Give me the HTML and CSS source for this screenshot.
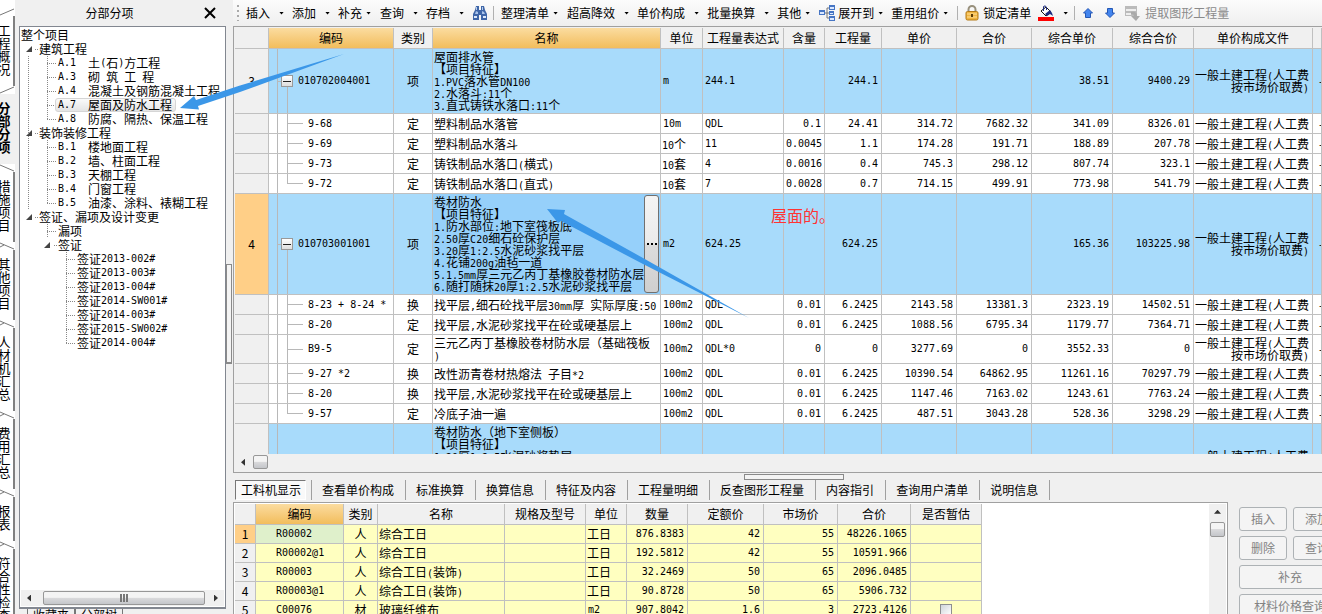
FILE: index.html
```html
<!DOCTYPE html>
<html lang="zh-CN">
<head>
<meta charset="utf-8">
<title>分部分项</title>
<link rel="stylesheet" href="styles.css">
</head>
<body>
<div class="app">
  <nav class="side">
    <svg class="sep" viewBox="0 0 15 8"><path d="M0 7L14 1"/></svg><button class="vtab">工程概况</button>
    <svg class="sep" viewBox="0 0 15 8"><path d="M0 7L14 1"/></svg><button class="vtab on">分部分项</button>
    <svg class="sep" viewBox="0 0 15 8"><path d="M0 1L14 7"/></svg><button class="vtab">措施项目</button>
    <svg class="sep" viewBox="0 0 15 8"><path d="M0 1L14 7M0 5L4 3"/></svg><button class="vtab">其他项目</button>
    <svg class="sep" viewBox="0 0 15 8"><path d="M0 1L14 7M0 5L4 3"/></svg><button class="vtab">人材机汇总</button>
    <svg class="sep" viewBox="0 0 15 8"><path d="M0 1L14 7M0 5L4 3"/></svg><button class="vtab">费用汇总</button>
    <svg class="sep" viewBox="0 0 15 8"><path d="M0 1L14 7M0 5L4 3"/></svg><button class="vtab">报表</button>
    <svg class="sep" viewBox="0 0 15 8"><path d="M0 1L14 7M0 5L4 3"/></svg><button class="vtab">符合性检查</button>
  </nav>

  <aside class="panel">
    <header class="panel-head"><h1>分部分项</h1><button class="close" aria-label="关闭"><svg width="12" height="12" viewBox="0 0 12 12"><path d="M1 1L11 11M11 1L1 11" stroke="#000" stroke-width="2"/></svg></button></header>
    <div class="tree">
      <ul>
        <li>整个项目</li>
        <li><i class="g open"></i>建筑工程</li>
        <li><i class="g v"></i><i class="g t"></i><span class="n">A.1  </span>土<span class="n">(</span>石<span class="n">)</span>方工程</li>
        <li><i class="g v"></i><i class="g t"></i><span class="n">A.3  </span>砌<span class="n"> </span>筑<span class="n"> </span>工<span class="n"> </span>程</li>
        <li><i class="g v"></i><i class="g t"></i><span class="n">A.4  </span>混凝土及钢筋混凝土工程</li>
        <li><i class="g v"></i><i class="g t"></i><b class="sel"><span class="n">A.7  </span>屋面及防水工程</b></li>
        <li><i class="g v"></i><i class="g e"></i><span class="n">A.8  </span>防腐、隔热、保温工程</li>
        <li><i class="g open v"></i>装饰装修工程</li>
        <li><i class="g v"></i><i class="g t"></i><span class="n">B.1  </span>楼地面工程</li>
        <li><i class="g v"></i><i class="g t"></i><span class="n">B.2  </span>墙、柱面工程</li>
        <li><i class="g v"></i><i class="g t"></i><span class="n">B.3  </span>天棚工程</li>
        <li><i class="g v"></i><i class="g t"></i><span class="n">B.4  </span>门窗工程</li>
        <li><i class="g v"></i><i class="g e"></i><span class="n">B.5  </span>油漆、涂料、裱糊工程</li>
        <li><i class="g open"></i>签证、漏项及设计变更</li>
        <li><i class="g"></i><i class="g t"></i>漏项</li>
        <li><i class="g"></i><i class="g open"></i>签证</li>
        <li><i class="g"></i><i class="g"></i><i class="g t"></i>签证<span class="n">2013-002#</span></li>
        <li><i class="g"></i><i class="g"></i><i class="g t"></i>签证<span class="n">2013-003#</span></li>
        <li><i class="g"></i><i class="g"></i><i class="g t"></i>签证<span class="n">2013-004#</span></li>
        <li><i class="g"></i><i class="g"></i><i class="g t"></i>签证<span class="n">2014-SW001#</span></li>
        <li><i class="g"></i><i class="g"></i><i class="g t"></i>签证<span class="n">2014-003#</span></li>
        <li><i class="g"></i><i class="g"></i><i class="g t"></i>签证<span class="n">2015-SW002#</span></li>
        <li><i class="g"></i><i class="g"></i><i class="g e"></i>签证<span class="n">2014-004#</span></li>
      </ul>
      <div class="hbar"><i class="arr left"></i><div class="thumb"><i></i><i></i><i></i></div><i class="arr right"></i></div>
    </div>
    <footer class="panel-tabs"><a href="#fav">收藏夹</a><a href="#tree">分部树</a></footer>
  </aside>

  <div class="vsplit"><i></i></div>

  <main class="main">
    <div class="toolbar">
      <i class="grip"></i>
      <button class="tb wide">插入</button><button class="tb wide">添加</button><button class="tb">补充</button><button class="tb wide">查询</button><button class="tb wide">存档</button>
      <button class="ic" aria-label="查找"><svg width="16" height="16" viewBox="0 0 16 16"><path d="M4 1h3v4h2V1h3l1 4 2 4v6H9v-5H7v5H1V9l2-4z" fill="#3f66a8"/><path d="M3 9l1-3 2 1v2zM10 9V6l2 1 1 2z" fill="#a9c3ea"/><path d="M2 11h3v2H2zM11 11h3v2h-3z" fill="#dce8fa"/><path d="M4.500 2v3M10.500 2v3" stroke="#b9cdec"/></svg></button>
      <i class="bar"></i>
      <button class="tb">整理清单</button><button class="tb wide">超高降效</button><button class="tb wide">单价构成</button><button class="tb wide">批量换算</button><button class="tb">其他</button>
      <button class="tb pic"><svg width="16" height="16" viewBox="0 0 16 16"><path d="M5 8h3M8 3v10M8 3h3M8 13h3M8 8h3" stroke="#777" fill="none"/><path d="M0 5h6v5H0zM10 0h6v5h-6zM10 6h5v4h-5zM10 11h6v5h-6z" fill="#4776c4"/><path d="M1 7h4v2H1zM11 2h4v2h-4zM11 8h3v1h-3zM11 13h4v2h-4z" fill="#dbe8ff"/></svg>展开到</button><button class="tb">重用组价</button>
      <i class="bar"></i>
      <button class="lock"><svg width="14" height="16" viewBox="0 0 14 16"><path d="M3.500 7V4.500a3.500 3.500 0 0 1 7 0V7" fill="none" stroke="#98907c" stroke-width="2"/><rect x="1" y="6.500" width="12" height="8.500" rx="1.500" fill="#f0b542" stroke="#b37a18"/><path d="M2 9h10M2 12h10" stroke="#ffe09a"/><path d="M7 9v3" stroke="#5c3d08" stroke-width="2"/></svg>锁定清单</button>
      <button class="tb paint" aria-label="填充颜色"><svg width="16" height="16" viewBox="0 0 16 16"><path d="M3 6l5-4 5 5-5 4z" fill="#fff" stroke="#111"/><path d="M5.500 6V1.500Q7 0 8.500 2v3" stroke="#1c2c80" fill="none"/><path d="M7 9l5-4 2 3 1 3-3-2-3 2z" fill="#1c2c80"/><path d="M0 12h16v4H0z" fill="#f00"/></svg></button>
      <i class="bar"></i>
      <button class="ic up" aria-label="上移"><svg width="10" height="10" viewBox="0 0 10 10"><path d="M5 .5L9.500 5H7.500V9.500H2.500V5H.5z" fill="#4385ee" stroke="#2457b5"/></svg></button>
      <button class="ic down" aria-label="下移"><svg width="10" height="10" viewBox="0 0 10 10"><path d="M5 9.500L.5 5h2V.5h5V5h2z" fill="#4385ee" stroke="#2457b5"/></svg></button>
      <button class="extract" disabled><svg width="16" height="16" viewBox="0 0 16 16"><path d="M0 1h12v10H0z" fill="#bbb"/><path d="M1 4h10v2H1zM1 8h5v2H1z" fill="#eee"/><path d="M6 7q6-1 6 4h3l-4 5-5-5h3q0-2-3-2z" fill="#aaa"/></svg>提取图形工程量</button>
    </div>

    <section class="upper">
      <div class="clip">
      <table class="grid">
        <colgroup><col class="w34"><col class="w125"><col class="w39"><col class="w228"><col class="w42"><col class="w81"><col class="w41"><col class="w57"><col class="w75"><col class="w75"><col class="w81"><col class="w81"><col class="w119"><col></colgroup>
        <thead><tr><th></th><th class="hot">编码</th><th>类别</th><th class="hot">名称</th><th>单位</th><th>工程量表达式</th><th>含量</th><th>工程量</th><th>单价</th><th>合价</th><th>综合单价</th><th>综合合价</th><th>单价构成文件</th><th></th></tr></thead>
        <tbody>
        <tr class="blue"><th>3</th><td class="code parent"><button class="fold" aria-label="折叠"></button>010702004001</td><td class="c">项</td><td>屋面排水管<br>【项目特征】<br><span class="n">1.PVC</span>落水管<span class="n">DN100</span><br><span class="n">2.</span>水落斗<span class="n">:11</span>个<br><span class="n">3.</span>直式铸铁水落口<span class="n">:11</span>个</td><td class="m">m</td><td class="m">244.1</td><td></td><td class="m r">244.1</td><td></td><td></td><td class="m r">38.51</td><td class="m r">9400.29</td><td class="f">一般土建工程<span class="n">(</span>人工费<br>按市场价取费<span class="n">)</span></td><td class="d">-</td></tr>
        <tr><th></th><td class="code">9-68</td><td class="c">定</td><td>塑料制品水落管</td><td class="m">10m</td><td class="m">QDL</td><td class="m r">0.1</td><td class="m r">24.41</td><td class="m r">314.72</td><td class="m r">7682.32</td><td class="m r">341.09</td><td class="m r">8326.01</td><td class="f">一般土建工程<span class="n">(</span>人工费</td><td class="d">-</td></tr>
        <tr><th></th><td class="code">9-69</td><td class="c">定</td><td>塑料制品水落斗</td><td><span class="n">10</span>个</td><td class="m">11</td><td class="m r">0.0045</td><td class="m r">1.1</td><td class="m r">174.28</td><td class="m r">191.71</td><td class="m r">188.89</td><td class="m r">207.78</td><td class="f">一般土建工程<span class="n">(</span>人工费</td><td class="d">-</td></tr>
        <tr><th></th><td class="code">9-73</td><td class="c">定</td><td>铸铁制品水落口<span class="n">(</span>横式<span class="n">)</span></td><td><span class="n">10</span>套</td><td class="m">4</td><td class="m r">0.0016</td><td class="m r">0.4</td><td class="m r">745.3</td><td class="m r">298.12</td><td class="m r">807.74</td><td class="m r">323.1</td><td class="f">一般土建工程<span class="n">(</span>人工费</td><td class="d">-</td></tr>
        <tr><th></th><td class="code last">9-72</td><td class="c">定</td><td>铸铁制品水落口<span class="n">(</span>直式<span class="n">)</span></td><td><span class="n">10</span>套</td><td class="m">7</td><td class="m r">0.0028</td><td class="m r">0.7</td><td class="m r">714.15</td><td class="m r">499.91</td><td class="m r">773.98</td><td class="m r">541.79</td><td class="f">一般土建工程<span class="n">(</span>人工费</td><td class="d">-</td></tr>
        <tr class="blue"><th class="cur">4</th><td class="code parent"><button class="fold" aria-label="折叠"></button>010703001001</td><td class="c">项</td><td class="active">卷材防水<br>【项目特征】<br><span class="n">1.</span>防水部位<span class="n">:</span>地下室筏板底<br><span class="n">2.50</span>厚<span class="n">C20</span>细石砼保护层<br><span class="n">3.20</span>厚<span class="n">1:2.5</span>水泥砂浆找平层<br><span class="n">4.</span>花铺<span class="n">200g</span>油毡一道<br><span class="n">5.1.5mm</span>厚三元乙丙丁基橡胶卷材防水层<br><span class="n">6.</span>随打随抹<span class="n">20</span>厚<span class="n">1:2.5</span>水泥砂浆找平层<button class="more" aria-label="更多"><i></i><i></i><i></i></button></td><td class="m">m2</td><td class="m">624.25</td><td></td><td class="m r">624.25</td><td></td><td></td><td class="m r">165.36</td><td class="m r">103225.98</td><td class="f">一般土建工程<span class="n">(</span>人工费<br>按市场价取费<span class="n">)</span></td><td class="d">-</td></tr>
        <tr><th></th><td class="code">8-23 + 8-24 *</td><td class="c">换</td><td>找平层<span class="n">,</span>细石砼找平层<span class="n">30mm</span>厚<span class="n"> </span>实际厚度<span class="n">:50</span></td><td class="m">100m2</td><td class="m">QDL</td><td class="m r">0.01</td><td class="m r">6.2425</td><td class="m r">2143.58</td><td class="m r">13381.3</td><td class="m r">2323.19</td><td class="m r">14502.51</td><td class="f">一般土建工程<span class="n">(</span>人工费</td><td class="d">-</td></tr>
        <tr><th></th><td class="code">8-20</td><td class="c">定</td><td>找平层<span class="n">,</span>水泥砂浆找平在砼或硬基层上</td><td class="m">100m2</td><td class="m">QDL</td><td class="m r">0.01</td><td class="m r">6.2425</td><td class="m r">1088.56</td><td class="m r">6795.34</td><td class="m r">1179.77</td><td class="m r">7364.71</td><td class="f">一般土建工程<span class="n">(</span>人工费</td><td class="d">-</td></tr>
        <tr><th></th><td class="code">B9-5</td><td class="c">定</td><td>三元乙丙丁基橡胶卷材防水层（基础筏板<br><span class="n">)</span></td><td class="m">100m2</td><td class="m">QDL*0</td><td class="m r">0</td><td class="m r">0</td><td class="m r">3277.69</td><td class="m r">0</td><td class="m r">3552.33</td><td class="m r">0</td><td class="f">一般土建工程<span class="n">(</span>人工费<br>按市场价取费<span class="n">)</span></td><td class="d">-</td></tr>
        <tr><th></th><td class="code">9-27 *2</td><td class="c">换</td><td>改性沥青卷材热熔法<span class="n"> </span>子目<span class="n">*2</span></td><td class="m">100m2</td><td class="m">QDL</td><td class="m r">0.01</td><td class="m r">6.2425</td><td class="m r">10390.54</td><td class="m r">64862.95</td><td class="m r">11261.16</td><td class="m r">70297.79</td><td class="f">一般土建工程<span class="n">(</span>人工费</td><td class="d">-</td></tr>
        <tr><th></th><td class="code">8-20</td><td class="c">换</td><td>找平层<span class="n">,</span>水泥砂浆找平在砼或硬基层上</td><td class="m">100m2</td><td class="m">QDL</td><td class="m r">0.01</td><td class="m r">6.2425</td><td class="m r">1147.46</td><td class="m r">7163.02</td><td class="m r">1243.61</td><td class="m r">7763.24</td><td class="f">一般土建工程<span class="n">(</span>人工费</td><td class="d">-</td></tr>
        <tr><th></th><td class="code last">9-57</td><td class="c">定</td><td>冷底子油一遍</td><td class="m">100m2</td><td class="m">QDL</td><td class="m r">0.01</td><td class="m r">6.2425</td><td class="m r">487.51</td><td class="m r">3043.28</td><td class="m r">528.36</td><td class="m r">3298.29</td><td class="f">一般土建工程<span class="n">(</span>人工费</td><td class="d">-</td></tr>
        <tr class="blue tall"><th></th><td class="code parent"></td><td></td><td class="top">卷材防水（地下室侧板）<br>【项目特征】<br><span class="n">1.20</span>厚<span class="n">1:2.5</span>水泥砂浆垫层</td><td></td><td></td><td></td><td></td><td></td><td></td><td></td><td></td><td class="f">一般土建工程<span class="n">(</span>人工费<br>按市场价取费<span class="n">)</span></td><td></td></tr>
        </tbody>
      </table>
      </div>
      <div class="hbar plain"><i class="arr left"></i><div class="thumb"></div></div>
    </section>

    <div class="hsplit"><i></i></div>
    <nav class="tabs"><button class="on">工料机显示</button><button>查看单价构成</button><button>标准换算</button><button>换算信息</button><button>特征及内容</button><button>工程量明细</button><button>反查图形工程量</button><button>内容指引</button><button>查询用户清单</button><button>说明信息</button></nav>

    <section class="lower">
      <div class="detail">
        <div class="clip">
        <table class="grid yellow">
          <colgroup><col class="w21"><col class="w88"><col class="w34"><col class="w127"><col class="w81"><col class="w41"><col class="w61"><col class="w76"><col class="w74"><col class="w73"><col class="w71"></colgroup>
          <thead><tr><th></th><th class="hot">编码</th><th>类别</th><th>名称</th><th>规格及型号</th><th>单位</th><th>数量</th><th>定额价</th><th>市场价</th><th>合价</th><th>是否暂估</th></tr></thead>
          <tbody>
          <tr><th class="cur">1</th><td class="id focus">R00002</td><td class="c">人</td><td>综合工日</td><td></td><td>工日</td><td class="m r">876.8383</td><td class="m r">42</td><td class="m r">55</td><td class="m r">48226.1065</td><td></td></tr>
          <tr><th>2</th><td class="id">R00002@1</td><td class="c">人</td><td>综合工日</td><td></td><td>工日</td><td class="m r">192.5812</td><td class="m r">42</td><td class="m r">55</td><td class="m r">10591.966</td><td></td></tr>
          <tr><th>3</th><td class="id">R00003</td><td class="c">人</td><td>综合工日<span class="n">(</span>装饰<span class="n">)</span></td><td></td><td>工日</td><td class="m r">32.2469</td><td class="m r">50</td><td class="m r">65</td><td class="m r">2096.0485</td><td></td></tr>
          <tr><th>4</th><td class="id">R00003@1</td><td class="c">人</td><td>综合工日<span class="n">(</span>装饰<span class="n">)</span></td><td></td><td>工日</td><td class="m r">90.8728</td><td class="m r">50</td><td class="m r">65</td><td class="m r">5906.732</td><td></td></tr>
          <tr><th>5</th><td class="id">C00076</td><td class="c">材</td><td>玻璃纤维布</td><td></td><td class="m">m2</td><td class="m r">907.8042</td><td class="m r">1.6</td><td class="m r">3</td><td class="m r">2723.4126</td><td class="c"><input type="checkbox" aria-label="是否暂估"></td></tr>
          </tbody>
        </table>
        </div>
        <div class="vbar"><i class="arr top"></i><div class="thumb"></div></div>
      </div>
      <div class="actions">
        <button disabled>插入</button><button disabled>添加</button>
        <button disabled>删除</button><button disabled>查询</button>
        <button disabled class="full">补充</button>
        <button disabled class="full">材料价格查询</button>
      </div>
    </section>
  </main>

  <svg class="notes" viewBox="0 0 1322 614" width="1322" height="614">
    <path d="M180 108L194 96L196 100L240 85.500L344 54L240 92L198 106L199 109.500Z"/>
    <path d="M547 209L565 210L564 214L643 258L749 318L643 264L561 221L558 223Z"/>
  </svg>
  <p class="remark">屋面的。</p>
</div>
</body>
</html>
```
FILE: styles.css
```css
* { box-sizing: border-box; }
body {
  margin: 0;
  background: #f0f0f0;
  color: #000;
  font: 12px/12px "Noto Sans CJK SC", "Noto Sans", sans-serif;
}
button {
  margin: 0;
  padding: 0;
  border: 0;
  background: none;
  color: inherit;
  font: inherit;
  white-space: nowrap;
}
ul, p, h1 { margin: 0; padding: 0; }
.n, .m, .code, .id { font-family: "DejaVu Sans Mono", monospace; font-size: 10px; }
.n { line-height: 0; white-space: pre; }

.app {
  position: relative;
  display: grid;
  grid-template-columns: 15px 211px 7px minmax(0, 1fr);
  grid-template-rows: 100vh;
  overflow: hidden;
}

/* vertical page tabs */
.side {
  display: flex;
  flex-direction: column;
  padding-top: 8px;
  overflow: hidden;
  background: #fff;
}
.sep { flex: none; width: 15px; height: 8px; }
.sep path { stroke: #777; fill: none; }
.vtab {
  flex: none;
  width: 15px;
  padding: 8px 5px 10px 0;
  border-right: 2px solid #808080;
  background: #fff;
  font-size: 13px;
  line-height: 13px;
  writing-mode: vertical-rl;
  display: flex;
  align-items: center;
}
.vtab.on { border-color: #f0f0f0; background: #f0f0f0; font-weight: bold; }

/* section tree */
.panel { display: flex; flex-direction: column; min-width: 0; padding-left: 4px; }
.panel-head { display: flex; align-items: center; height: 26px; padding-right: 10px; }
.panel-head h1 { flex: 1; padding-right: 4px; font-size: 12px; font-weight: normal; text-align: center; }
.close { display: flex; }
.tree {
  flex: 1;
  display: flex;
  flex-direction: column;
  min-height: 0;
  padding: 1px;
  border: 1px solid #828790;
  border-bottom-width: 2px;
  background: #fff;
  overflow: hidden;
}
.tree ul { flex: 1; list-style: none; min-height: 0; }
.tree li { display: flex; align-items: center; height: 14px; line-height: 14px; white-space: nowrap; }
.tree .n { line-height: 14px; }
.g { flex: none; width: 18px; height: 14px; background-repeat: no-repeat; }
.g + .g { width: 19px; }
.v { background-image: repeating-linear-gradient(#888 0 1px, transparent 1px 2px); background-size: 1px 14px; background-position: 7px 0; }
.t, .e { background-image: repeating-linear-gradient(#888 0 1px, transparent 1px 2px), repeating-linear-gradient(90deg, #888 0 1px, transparent 1px 2px); background-size: 1px 14px, 9px 1px; background-position: 8px 0, 8px 7px; }
.e { background-size: 1px 8px, 9px 1px; }
.open { display: flex; align-items: center; justify-content: space-between; padding: 0 1px 0 5px; }
.open::before { content: ""; width: 6px; height: 6px; background: #444; clip-path: polygon(100% 0, 100% 100%, 0 100%); }
.open::after { content: ""; width: 3px; height: 1px; background: repeating-linear-gradient(90deg, #888 0 1px, transparent 1px 2px); }
.sel {
  display: flex;
  align-items: center;
  height: 14px;
  margin-left: -3px;
  padding: 0 3px 0 2px;
  border: 1px solid #d5d5d5;
  border-radius: 3px;
  background: linear-gradient(#fafafa, #e4e4e4);
  font-weight: normal;
}
.panel-tabs { display: flex; height: 5px; padding-left: 8px; overflow: hidden; }
.panel-tabs a { height: 16px; padding: 0 5px; border: 1px solid #777; border-top: 0; color: #000; text-decoration: none; line-height: 12px; }

/* scroll bars */
.hbar { flex: none; display: flex; align-items: center; height: 16px; background: #f0f0f0; }
.thumb {
  display: flex;
  align-items: center;
  justify-content: center;
  gap: 1px;
  border: 1px solid #979797;
  border-radius: 2px;
  background: linear-gradient(#f4f4f4 0 45%, #dadadc 50%, #c4c6ca);
}
.hbar .thumb { flex: 1; height: 14px; }
.thumb i { width: 2px; height: 8px; background: #777; }
.arr { flex: none; width: 4px; height: 7px; background: #333; }
.arr.left { margin: 0 12px 0 6px; clip-path: polygon(100% 0, 100% 100%, 0 50%); }
.arr.right { margin: 0 6px 0 9px; clip-path: polygon(0 0, 100% 50%, 0 100%); }
.arr.top { width: 7px; height: 4px; clip-path: polygon(50% 0, 100% 100%, 0 100%); }
.hbar.plain { height: 17px; }
.hbar.plain .arr { margin-right: 8px; }
.hbar.plain .thumb { flex: none; width: 15px; }
.vbar { flex: none; display: flex; flex-direction: column; align-items: center; gap: 8px; width: 17px; padding-top: 6px; background: #f0f0f0; }
.vbar .thumb { width: 15px; height: 15px; }

/* splitters */
.vsplit { padding-top: 264px; }
.vsplit i { display: block; width: 6px; height: 100px; border: 2px solid #8a8a8a; border-width: 1px 1px 2px; background: #f4f4f4; }
.hsplit { display: flex; justify-content: center; height: 7px; padding: 1px 0 0 32px; }
.hsplit i { width: 100px; border: 1px solid #8a8a8a; background: #f4f4f4; }

/* toolbar */
.main { display: flex; flex-direction: column; min-width: 0; }
.toolbar { display: flex; align-items: center; height: 26px; padding-left: 4px; background: linear-gradient(#fcfcfc, #efefef); overflow: hidden; }
.toolbar > * { flex: none; }
.grip { width: 2px; height: 16px; margin-right: 7px; background: repeating-linear-gradient(#aaa 0 2px, transparent 2px 5px); }
.tb { display: flex; align-items: center; gap: 4px; margin-right: 9px; }
.tb.wide { gap: 9px; margin-right: 8px; }
.tb::after { content: ""; width: 5px; height: 3px; background: #000; clip-path: polygon(0 0, 100% 0, 50% 100%); }
.ic { display: flex; }
.bar { width: 1px; height: 14px; margin: 0 7px 0 5px; background: #b0b0b0; }
.tb + .bar { margin-left: 0; }
.pic { margin-right: 8px; }
.pic svg { margin-right: -1px; }
.lock, .extract { display: flex; align-items: center; gap: 4px; }
.tb.paint { gap: 9px; margin: 0 6px 0 7px; }
.up { margin-left: 1px; }
.down { margin: 0 10px 0 12px; }
.extract { color: #8a8a8a; }

/* grids */
.upper { flex: 446 0 0; display: flex; flex-direction: column; min-height: 0; padding: 1px 0 1px 1px; border: 1px solid #a0a0a0; border-right: 0; }
.clip { flex: 1; min-width: 0; min-height: 0; overflow: hidden; background: #fff; }
.grid { width: 100%; table-layout: fixed; border-collapse: separate; border-spacing: 0; }
.grid th, .grid td {
  height: 20px;
  padding: 2px 1px;
  border: solid #c0c0c0;
  border-width: 0 1px 1px 0;
  overflow: hidden;
  text-align: left;
  white-space: nowrap;
  font-weight: normal;
}
.grid th { background: #f0f0f0; text-align: center; }
.grid thead th { height: 21px; }
.grid th.hot { background: linear-gradient(#fbdca0, #f2bd5c); }
.grid th.cur { background: #ffcf87; }
.grid .c { text-align: center; }
.grid .r { padding-right: 3px; text-align: right; }
.grid .f { padding: 2px 3px 2px 1px; text-align: right; }
.grid .d { padding: 2px 0 2px 6px; }
.grid .m { padding-left: 2px; }
.blue td { background-color: #a8dbfb; }
.grid td.code {
  padding-left: 39px;
  white-space: pre;
  background-image: linear-gradient(#b8b8b8, #b8b8b8), linear-gradient(#b8b8b8, #b8b8b8), linear-gradient(#b8b8b8, #b8b8b8);
  background-repeat: no-repeat;
  background-size: 1px 100%, 1px 100%, 16px 1px;
  background-position: 8px 0, 18px 0, 18px 50%;
}
.grid td.code.last { background-size: 1px 100%, 1px 50%, 16px 1px; }
.grid td.code.parent { padding-left: 12px; background-size: 1px 100%, 1px 50%, 6px 1px; background-position: 8px 0, 18px 100%, 8px 50%; }
.tall td, .tall th { height: 77px; }
.grid .tall td.code.parent { background-size: 1px 100%, 0 0, 0 0; }
.grid td.top { vertical-align: top; }
.fold { width: 12px; height: 12px; margin-right: 5px; border: 1px solid #999; background: linear-gradient(#222, #222) center / 8px 1px no-repeat, linear-gradient(#fff, #ddd); vertical-align: middle; }
.grid td.active { position: relative; background: #96d0fa; }
.more {
  position: absolute;
  top: 1px;
  right: 1px;
  bottom: 1px;
  display: flex;
  align-items: center;
  justify-content: center;
  gap: 2px;
  width: 15px;
  border: 1px solid #707070;
  border-radius: 3px;
  background: linear-gradient(#f4f4f4, #ebebeb 48%, #dcdcdc 52%, #cfcfcf);
}
.more i { width: 2px; height: 2px; background: #000; }
.w21 { width: 21px; } .w34 { width: 34px; } .w39 { width: 39px; } .w41 { width: 41px; }
.w42 { width: 42px; } .w57 { width: 57px; } .w61 { width: 61px; } .w71 { width: 71px; }
.w73 { width: 73px; } .w74 { width: 74px; } .w75 { width: 75px; } .w76 { width: 76px; }
.w81 { width: 81px; } .w88 { width: 88px; } .w119 { width: 119px; } .w125 { width: 125px; }
.w127 { width: 127px; } .w228 { width: 228px; }

/* detail tabs */
.tabs { display: flex; align-items: stretch; height: 22px; padding: 0 0 2px 2px; }
.tabs button { padding: 0 11px 0 10px; border-right: 1px solid #a0a0a0; }
.tabs .on { margin-right: 5px; padding: 1px 4px 0 5px; border: 1px solid #fff; border-top-color: #777; border-left-color: #777; background: #f9f9f9; }
.tabs .on + button { padding-left: 10px; border-left: 1px solid #a0a0a0; }

.lower { flex: 113 0 0; display: flex; min-height: 0; overflow: hidden; }
.detail { flex: 1; display: flex; min-width: 0; padding: 1px 1px 0 1px; border: 1px solid #a0a0a0; border-bottom: 0; background: #fff; }
.yellow { width: 747px; }
.yellow td, .yellow tbody th { height: 19px; }
.yellow td { background: #ffffc0; }
.grid td.id { padding-left: 20px; }
.grid td.focus { background: #dff0cb; }
.yellow input { appearance: none; width: 12px; height: 12px; margin: 0; border: 1px solid #8e8f8f; background: linear-gradient(135deg, #d0d5da, #fff); vertical-align: top; }
.actions {
  flex: none;
  display: grid;
  grid-template-columns: 48px 48px;
  grid-auto-rows: 24px;
  gap: 5px 6px;
  width: 94px;
  padding: 5px 0 0 11px;
  overflow: hidden;
}
.actions button { border: 1px solid #adb2b5; border-radius: 3px; background: #f4f4f4; color: #838383; }
.actions .full { grid-column: span 2; }

/* annotations over the window */
.notes { position: absolute; top: 0; left: 0; pointer-events: none; }
.notes path { fill: #3b97e8; }
.remark { position: absolute; top: 206px; left: 771px; color: #f33; font-size: 16px; line-height: 18px; }
```
